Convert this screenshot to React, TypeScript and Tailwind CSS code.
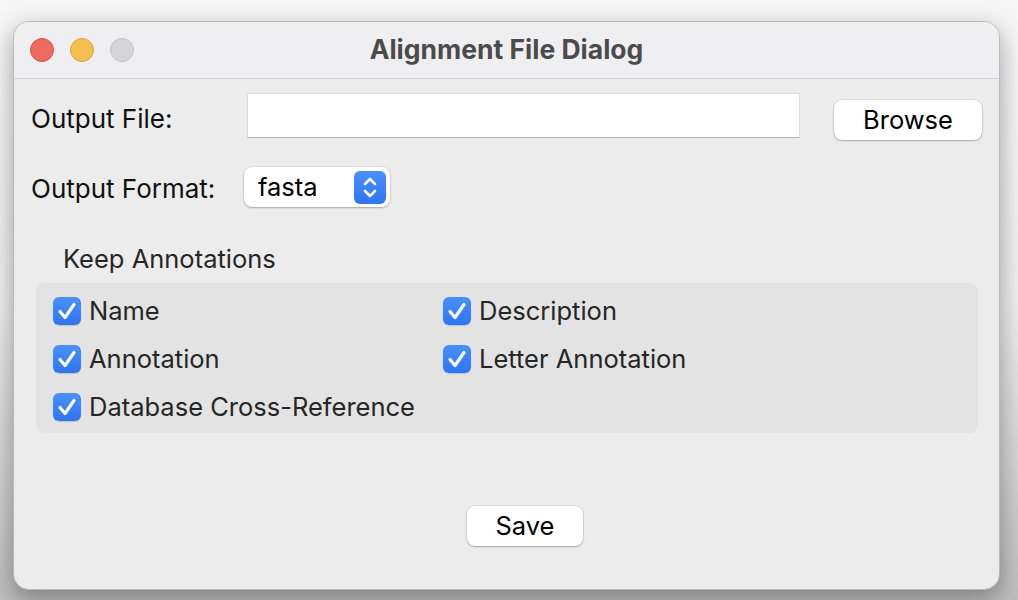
import React from "react"

function Check({ label }: { label: string }) {
  return (
    <label className="flex items-center gap-[8px] h-[28px]">
      <span className="w-[28px] h-[28px] rounded-[6px] bg-gradient-to-b from-[#4a90f9] to-[#2f74f5] shadow-[0_1px_1px_rgba(0,0,0,0.15)] flex items-center justify-center">
        <svg width="28" height="28" viewBox="0 0 28 28" fill="none">
          <path d="M7 14.5 L12 20.5 L21 7.5" stroke="white" strokeWidth="3.2" strokeLinecap="round" strokeLinejoin="round" />
        </svg>
      </span>
      <span className="text-[25.5px] text-[#262626] leading-none">{label}</span>
    </label>
  )
}

function PushButton({ children, className }: { children: React.ReactNode; className?: string }) {
  return (
    <button
      className={
        "h-[40px] rounded-[8px] bg-white text-[25.5px] text-black leading-none shadow-[0_0_0_0.5px_rgba(0,0,0,0.12),0_1px_2px_rgba(0,0,0,0.25)] " +
        (className ?? "")
      }
    >
      {children}
    </button>
  )
}

export default function App() {
  return (
    <div
      className="w-[1018px] h-[600px] bg-gradient-to-b from-[#f6f6f6] via-[#eeeeee] to-[#bdbdbd] pt-[21px] pl-[13px] overflow-hidden"
      style={{ fontFamily: "Inter, 'Noto Sans', sans-serif" }}
    >
      <div className="w-[987px] h-[569px] rounded-[16px] bg-[#ececec] border border-[#b9b9b9] shadow-[0_8px_24px_rgba(0,0,0,0.35)] overflow-hidden flex flex-col">
        {/* title bar */}
        <div className="h-[57px] shrink-0 bg-[#efeff1] border-b border-[#d2d2d2] flex items-center relative">
          <div className="flex items-center gap-[16px] pl-[16px]">
            <span className="w-[24px] h-[24px] rounded-full bg-[#ee6a5f] border border-[#d5544a]" />
            <span className="w-[24px] h-[24px] rounded-full bg-[#f5be4f] border border-[#dea236]" />
            <span className="w-[24px] h-[24px] rounded-full bg-[#d5d5d7] border border-[#c2c2c4]" />
          </div>
          <div className="absolute inset-0 flex items-center justify-center text-[26.5px] font-bold text-[#4b4b4b] pointer-events-none">
            Alignment File Dialog
          </div>
        </div>

        {/* body */}
        <div className="flex flex-col pl-[17px] pr-[17px]">
          <div className="flex items-center mt-[14px] h-[47px]">
            <span className="w-[216px] text-[26px] text-[#111] mt-[4px]">Output File:</span>
            <div className="w-[553px] h-[45px] self-start bg-white border border-[#dcdcdc] border-b-[#b3b3b3]" />
            <PushButton className="ml-[34px] w-[148px] mt-[6px]">Browse</PushButton>
          </div>

          <div className="flex items-center mt-[27px] h-[40px]">
            <span className="w-[213px] text-[26px] text-[#111] mt-[2px]">Output Format:</span>
            <div className="w-[146px] h-[40px] rounded-[8px] bg-white shadow-[0_0_0_0.5px_rgba(0,0,0,0.12),0_1px_2px_rgba(0,0,0,0.25)] flex items-center justify-between pl-[14px] pr-[4px]">
              <span className="text-[25.5px] text-black leading-none">fasta</span>
              <span className="w-[32px] h-[33px] rounded-[6px] bg-gradient-to-b from-[#4b90f9] to-[#2f74f5] flex items-center justify-center">
                <svg width="32" height="33" viewBox="0 0 32 33" fill="none">
                  <path d="M11 13 L16 8 L21 13" stroke="white" strokeWidth="2.6" strokeLinecap="round" strokeLinejoin="round" />
                  <path d="M11 20 L16 25 L21 20" stroke="white" strokeWidth="2.6" strokeLinecap="round" strokeLinejoin="round" />
                </svg>
              </span>
            </div>
          </div>

          <div className="mt-[39px] pl-[32px] text-[25.5px] text-[#262626] leading-none">Keep Annotations</div>

          <div className="mt-[11px] ml-[5px] mr-[4px] h-[150px] rounded-[8px] bg-[#e3e3e3] pl-[17px] pt-[14px]">
            <div className="grid grid-cols-[390px_1fr] gap-y-[20px]">
              <Check label="Name" />
              <Check label="Description" />
              <Check label="Annotation" />
              <Check label="Letter Annotation" />
              <Check label="Database Cross-Reference" />
            </div>
          </div>

          <div className="mt-[73px] pl-[436px]">
            <PushButton className="w-[116px]">Save</PushButton>
          </div>
        </div>
      </div>
    </div>
  )
}
